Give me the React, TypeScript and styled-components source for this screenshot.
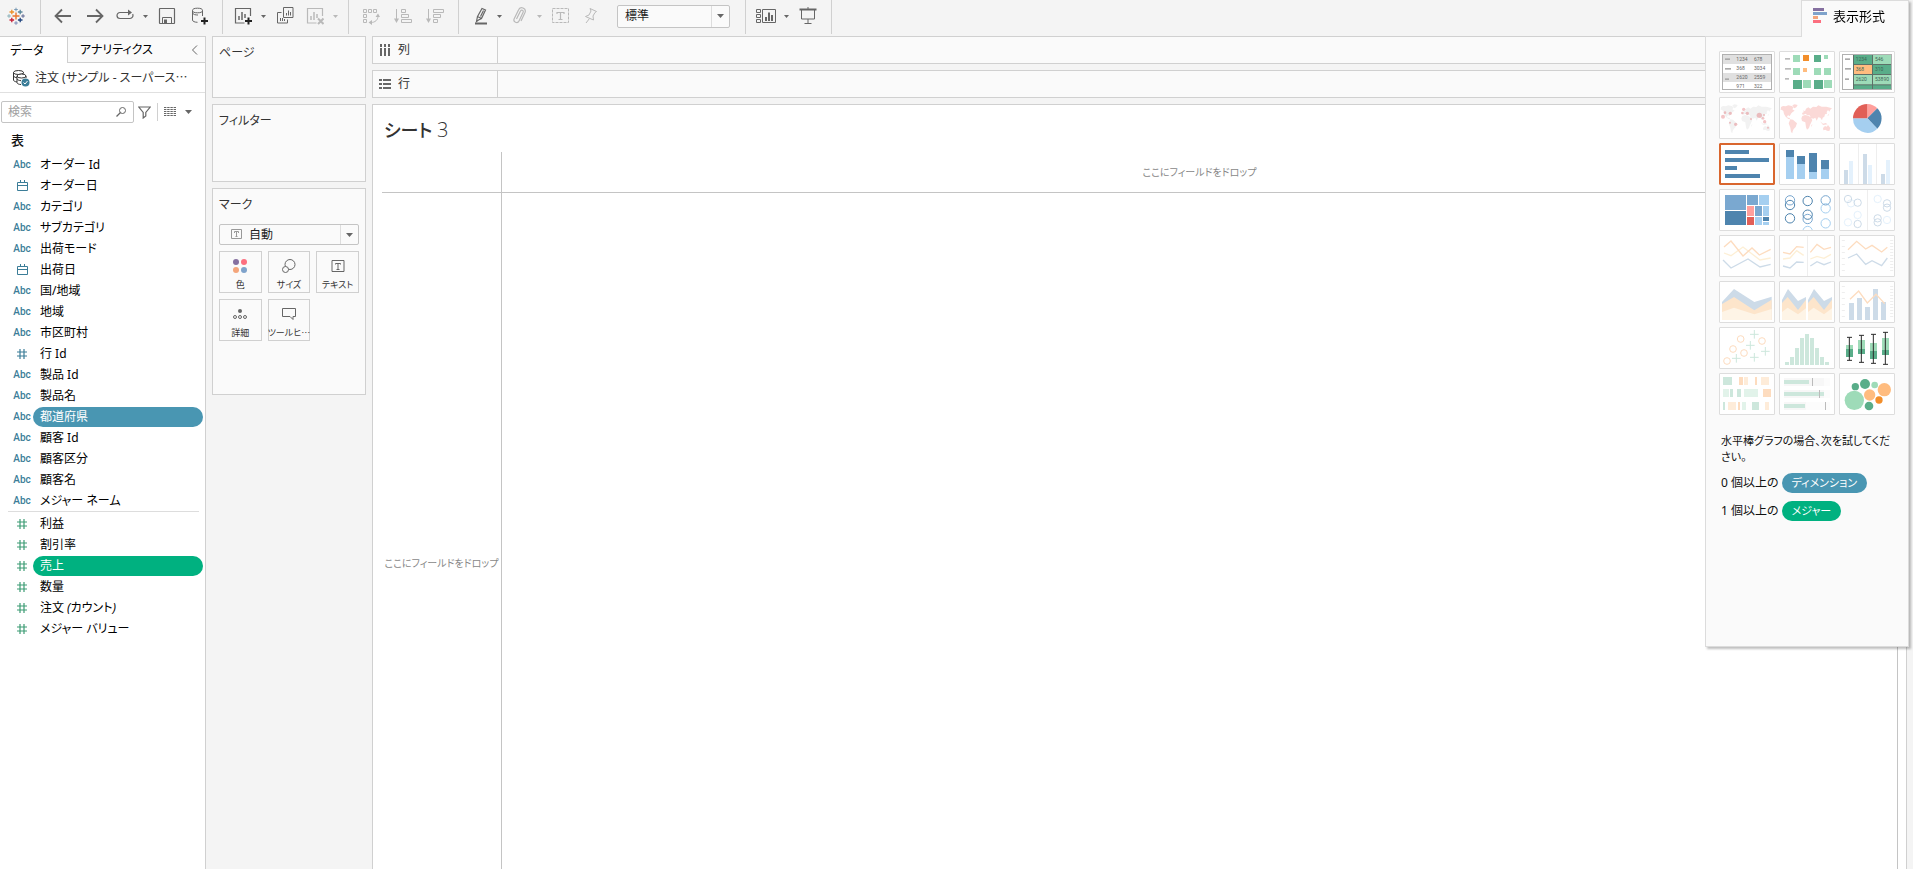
import React from "react";
import styled, { createGlobalStyle, css } from "styled-components";

const LINE = "#d0d0d0";
const BLUE = "#4996b2";
const GREEN = "#00b180";
const ICON = "#666";

const Global = createGlobalStyle`
  *, *::before, *::after { box-sizing: border-box; }
  body {
    margin: 0;
    background: #f4f4f4;
    color: #111;
    font-family: "Noto Sans", "Noto Sans CJK JP", sans-serif;
    font-size: 12px;
    line-height: 16px;
    font-feature-settings: "palt";
    font-synthesis: none;
  }
  button, input, select { font: inherit; color: inherit; font-feature-settings: inherit; }
  button { margin: 0; padding: 0; border: 0; background: none; cursor: pointer; }
  svg { display: block; flex: none; }
`;

/* ---------- layout ---------- */

const Page = styled.div`
  position: relative;
  display: flex;
  flex-direction: column;
  height: 100vh;
  overflow: hidden;
`;

const Toolbar = styled.header`
  display: flex;
  flex: none;
  height: 36px;
  padding-bottom: 2px;
`;

const ToolGroup = styled.div`
  display: flex;
  align-items: center;
  padding: 0 7px 2px 6px;
  border-right: 1px solid ${LINE};
`;

const ToolButton = styled.button<{ $paired?: boolean }>`
  display: flex;
  justify-content: center;
  align-items: center;
  width: ${(p) => (p.$paired ? 28 : 32)}px;
  height: 28px;
  color: ${ICON};
  &:disabled { color: #b9b9b9; }
`;

const CaretButton = styled(ToolButton)`
  width: 12px;
`;

const LogoButton = styled(ToolButton)`
  width: 20px;
  margin-right: 7px;
`;

const Body = styled.div`
  display: flex;
  flex: 1;
  min-height: 0;
`;

/* Centred ellipsis, as Japanese type sets it */
const Ellipsis = styled.span`
  font-family: "Noto Sans CJK JP", sans-serif;
`;

/* ---------- data pane ---------- */

const DataPane = styled.aside`
  flex: none;
  width: 206px;
  background: #fff;
  border: solid ${LINE};
  border-width: 1px 1px 0 0;
`;

const Tabs = styled.div`
  display: flex;
  height: 26px;
`;

const Tab = styled.button<{ $active?: boolean }>`
  flex: ${(p) => (p.$active ? "0 0 67px" : "1")};
  padding: 1px 10px 0;
  text-align: left;
  color: #000;
  ${(p) =>
    !p.$active &&
    css`
      display: flex;
      align-items: center;
      justify-content: space-between;
      padding: 1px 7px 0 12px;
      background: #fafafa;
      border: solid ${LINE};
      border-width: 0 0 1px 1px;
    `}
`;

const SourceRow = styled.div`
  display: flex;
  align-items: center;
  gap: 5px;
  height: 30px;
  padding-left: 12px;
  border-bottom: 1px solid #e0e0e0;
  color: #333;
  white-space: nowrap;
`;

const SearchRow = styled.div`
  display: flex;
  align-items: center;
  height: 22px;
  margin: 8px 0 0 1px;
  color: ${ICON};
`;

const SearchBox = styled.label`
  display: flex;
  align-items: center;
  width: 133px;
  height: 22px;
  padding: 0 6px;
  background: #fff;
  border: 1px solid #c4c4c4;
  border-radius: 2px;
`;

const SearchInput = styled.input`
  flex: 1;
  min-width: 0;
  padding: 0;
  border: 0;
  outline: 0;
  background: none;
  &::placeholder { color: #a0a0a0; opacity: 1; }
`;

const FilterButton = styled.button`
  padding: 0 6px 0 4px;
  color: ${ICON};
`;

const ViewButton = styled.button`
  display: flex;
  align-items: center;
  gap: 9px;
  height: 18px;
  padding-left: 6px;
  border-left: 1px solid ${LINE};
  color: ${ICON};
`;

const TableName = styled.h2`
  margin: 8px 0 5px 11px;
  font-size: 13px;
  font-weight: 500;
  line-height: 18px;
`;

const FieldList = styled.ul`
  margin: 0 0 0 6px;
  padding: 0;
  list-style: none;
`;

const Divider = styled.hr`
  height: 1px;
  margin: 0 6px 1px 8px;
  border: 0;
  background: #ddd;
`;

const Field = styled.li`
  display: flex;
  align-items: center;
  height: 21px;
`;

const FieldType = styled.span<{ $measure?: boolean }>`
  display: flex;
  justify-content: center;
  flex: 0 0 32px;
  color: ${(p) => (p.$measure ? "#3c9c74" : "#3b7d98")};
  font: 500 10px/16px Roboto, sans-serif;
`;

const FieldName = styled.button<{ $pill?: string; $italic?: boolean }>`
  flex: 1;
  height: 20px;
  margin: 0 2px 0 -5px;
  padding: 0 7px;
  border-radius: 10px;
  text-align: left;
  line-height: 20px;
  font-style: ${(p) => (p.$italic ? "italic" : "normal")};
  background: ${(p) => p.$pill || "none"};
  color: ${(p) => (p.$pill ? "#fff" : "#000")};
`;

/* ---------- cards ---------- */

const Cards = styled.div`
  display: flex;
  flex: none;
  flex-direction: column;
  gap: 6px;
  width: 166px;
  padding: 0 6px;
`;

const Card = styled.section<{ $height: number }>`
  min-height: ${(p) => p.$height}px;
  padding: 8px 6px;
  background: #fafafa;
  border: 1px solid ${LINE};
  color: #333;
`;

const CardTitle = styled.h2`
  margin: 0;
  font-size: 12px;
  font-weight: 400;
`;

const SelectWrap = styled.div<{ $wide?: boolean }>`
  position: relative;
  width: 113px;
  height: 23px;
  margin: 0 8px;
  ${(p) =>
    p.$wide &&
    css`
      width: auto;
      height: 21px;
      margin: 11px 0 6px;
    `}
`;

const Select = styled.select<{ $icon?: boolean }>`
  appearance: none;
  width: 100%;
  height: 100%;
  padding: 0 24px 0 ${(p) => (p.$icon ? 29 : 7)}px;
  border: 1px solid #c4c4c4;
  border-radius: 2px;
  background: #fafafa;
  color: #222;
`;

const SelectArrow = styled.span`
  position: absolute;
  inset: 1px 1px 1px auto;
  display: flex;
  align-items: center;
  justify-content: center;
  width: 18px;
  border-left: 1px solid #ddd;
  color: ${ICON};
  pointer-events: none;
`;

const SelectIcon = styled.span`
  position: absolute;
  top: 5px;
  left: 12px;
  color: #999;
  pointer-events: none;
`;

const MarkGrid = styled.div`
  display: grid;
  grid-template-columns: repeat(3, minmax(0, 1fr));
  gap: 6px;
`;

const MarkButton = styled.button`
  display: flex;
  flex-direction: column;
  align-items: center;
  justify-content: space-between;
  height: 42px;
  padding: 6px 0 0;
  border: 1px solid ${LINE};
  color: #333;
  font-size: 9px;
  line-height: 14px;
  white-space: nowrap;
`;

/* ---------- worksheet ---------- */

const Main = styled.main`
  display: flex;
  flex: 1;
  flex-direction: column;
  gap: 6px;
  min-width: 0;
  margin-right: 6px;
`;

const Shelf = styled.div`
  display: flex;
  flex: none;
  height: 28px;
  background: #fafafa;
  border: 1px solid ${LINE};
`;

const ShelfLabel = styled.div`
  display: flex;
  align-items: center;
  gap: 7px;
  width: 125px;
  padding-left: 6px;
  border-right: 1px solid ${LINE};
  color: #333;
`;

const Sheet = styled.section`
  display: flex;
  flex: 1;
  flex-direction: column;
  padding: 11px 8px 0 9px;
  background: #fff;
  border: solid ${LINE};
  border-width: 1px 1px 0;
`;

const SheetTitle = styled.h1`
  margin: 0 0 8px 2px;
  color: #333;
  font-size: 18px;
  font-weight: 500;
  line-height: 28px;
  span { font-family: "Open Sans", sans-serif; font-size: 20px; font-weight: 300; }
`;

const DropGrid = styled.div`
  display: grid;
  flex: 1;
  grid-template-columns: 120px 1fr;
  grid-template-rows: 41px 1fr;
  border-right: 1px solid #c4c4c4;
`;

const DropCell = styled.div<{ $right?: boolean; $bottom?: boolean; $low?: boolean }>`
  display: flex;
  align-items: center;
  justify-content: center;
  padding-top: ${(p) => (p.$low ? 64 : 0)}px;
  border: solid #c4c4c4;
  border-width: 0 ${(p) => (p.$right ? 1 : 0)}px ${(p) => (p.$bottom ? 1 : 0)}px 0;
  color: #888;
  font-size: 10px;
  white-space: nowrap;
`;

/* ---------- show me ---------- */

const ShowMe = styled.aside`
  position: absolute;
  top: 0;
  right: 4px;
  display: flex;
  flex-direction: column;
  align-items: flex-end;
  width: 204px;
  filter: drop-shadow(2px 2px 1px rgba(0, 0, 0, 0.25));
`;

const ShowMeTab = styled.button`
  position: relative;
  display: flex;
  align-items: center;
  gap: 5px;
  width: 108px;
  height: 37px;
  margin-bottom: -1px;
  padding: 0 0 6px 11px;
  background: #fafafa;
  border: 1px solid #dcdcdc;
  border-bottom: 0;
  font-size: 13px;
  color: #000;
`;

const ShowMePanel = styled.div`
  width: 100%;
  min-height: 611px;
  padding: 14px 12px 0 13px;
  background: #fafafa;
  border: 1px solid #dcdcdc;
`;

const Thumbs = styled.div`
  display: grid;
  grid-template-columns: repeat(3, 56px);
  gap: 4px;
`;

const Thumb = styled.button<{ $selected?: boolean }>`
  height: 42px;
  background: #fff;
  border: 1px solid ${(p) => (p.$selected ? "#d9662e" : "#ddd")};
  border-radius: 1px;
  box-shadow: ${(p) => (p.$selected ? "inset 0 0 0 1px #d9662e" : "none")};
`;

const Hint = styled.p`
  margin: 18px 0 8px 2px;
  font-size: 11px;
`;

const Requirement = styled.p`
  display: flex;
  align-items: center;
  gap: 3px;
  height: 20px;
  margin: 0 0 8px 2px;
`;

const Pill = styled.span<{ $color: string }>`
  padding: 0 10px;
  border-radius: 10px;
  background: ${(p) => p.$color};
  color: #fff;
  font-size: 11px;
  line-height: 20px;
`;

/* ---------- icons ---------- */

const Svg = ({ w = 18, h = 18, children }: { w?: number; h?: number; children: React.ReactNode }) => (
  <svg width={w} height={h} viewBox={`0 0 ${w} ${h}`} fill="none" stroke="currentColor" aria-hidden="true">
    {children}
  </svg>
);

const Caret = ({ big }: { big?: boolean }) =>
  big ? (
    <Svg w={7} h={4}><path d="M0 0h7L3.500 4z" fill="currentColor" stroke="none" /></Svg>
  ) : (
    <Svg w={5} h={3}><path d="M0 0h5L2.500 3z" fill="currentColor" stroke="none" /></Svg>
  );

const cross = (x: number, y: number, r: number, c: string, w: number) => (
  <path key={`${x}-${y}`} d={`M${x - r} ${y}h${2 * r}M${x} ${y - r}v${2 * r}`} stroke={c} strokeWidth={w} />
);

const Logo = () => (
  <Svg>
    {cross(9, 9, 3.5, "#e8762d", 1.4)}
    {cross(9, 2.5, 1.8, "#7b9bb5", 1)}
    {cross(9, 16, 1.8, "#7b88b5", 1)}
    {cross(2, 9, 1.8, "#8ab0b8", 1)}
    {cross(16, 9, 1.8, "#5c6692", 1)}
    {cross(4.8, 5, 2.3, "#eb912c", 1.3)}
    {cross(13.2, 5, 2.3, "#59879b", 1.3)}
    {cross(4.8, 13, 2.3, "#c72037", 1.3)}
    {cross(13.2, 13, 2.3, "#1f447e", 1.3)}
  </Svg>
);

const Back = () => <Svg><path d="M17 9H2M8 2.500L1.500 9L8 15.500" strokeWidth="1.800" /></Svg>;
const Forward = () => <Svg><path d="M1 9h15M10 2.500L16.500 9L10 15.500" strokeWidth="1.800" /></Svg>;
const Redo = () => (
  <Svg>
    <path d="M14 5.500H4a3 3 0 0 0-3 3a3 3 0 0 0 3 3h10a3 3 0 0 0 2.600-4.400" strokeWidth="1.200" />
    <path d="M12 2.500l4 3-4 3z" fill="currentColor" stroke="none" />
  </Svg>
);
const Save = () => (
  <Svg>
    <rect x="1.500" y="1.500" width="15" height="15" rx=".5" strokeWidth="1.200" />
    <path d="M4.500 16v-5.500h9V16" />
    <path d="M6 12.500h3V16H6z" fill="currentColor" stroke="none" />
  </Svg>
);
const PLUS = <path d="M11 14h7M14.500 10.500v7" stroke="#222" strokeWidth="2" />;
const Database = () => (
  <Svg>
    <ellipse cx="7.500" cy="3.500" rx="5" ry="2.300" />
    <path d="M2.500 3.500v9.500c0 1.400 2 2.200 5 2.300M12.500 3.500V9M2.500 6c.6 1.600 3 2 5.500 2" />
    {PLUS}
  </Svg>
);
const NewSheet = () => (
  <Svg>
    <path d="M16.500 9V1.500h-15v14.500h9" strokeWidth="1.200" />
    <path d="M5 13V9M8 13V5M11 11V7" strokeWidth="1.500" />
    {PLUS}
  </Svg>
);
const ClearSheet = () => (
  <Svg>
    <path d="M16.500 9V1.500h-15v14.500h9" strokeWidth="1.200" />
    <path d="M5 13V9M8 13V5M11 11V7" strokeWidth="1.500" />
    <path d="M12 11.500l5.500 5.500M17.500 11.500L12 17" strokeWidth="2" />
  </Svg>
);
const Duplicate = () => (
  <Svg>
    <path d="M7.500.5h9.500v10H7.500zM5.500 5.500h-4v10.500h10v-3.500M4.500 14v-3M6.500 14v-3M8.500 14v-2M10.500 8.500V6M12.500 8.500V3.500M14.500 8.500V5" />
  </Svg>
);
const Swap = () => (
  <Svg>
    <path d="M1.500 2.500h3v3h-3zM6.500 2.500h3v3h-3zM11.500 2.500h3v3h-3zM1.500 7.500h3v3h-3zM1.500 12.500h3v3h-3zM16 9c0 4-3 6.500-7 6.500" />
    <path d="M13.500 10L16 6.500l2 3.500zM10 13l-3.500 2.500L10 18z" fill="currentColor" stroke="none" />
  </Svg>
);
const Sort = ({ desc }: { desc?: boolean }) => (
  <Svg>
    <path d="M2.500 2v12" />
    <path d="M0 11.500h5L2.500 16z" fill="currentColor" stroke="none" />
    <path d={desc ? "M7.500 2.500h10v3h-10zM7.500 7.500h7v3h-7zM7.500 12.500h4v3h-4z" : "M7.500 2.500h4v3h-4zM7.500 7.500h7v3h-7zM7.500 12.500h10v3h-10z"} />
  </Svg>
);
const Highlighter = () => (
  <Svg>
    <path d="M7.500 9.500L12 1.500l3.500 1.500-4 8.500-3 1.500-2 1.500zM7.500 9.500l4 2M10.500 9.500l3-6" strokeWidth="1.200" />
    <path d="M5 16.500h12" strokeWidth="2" />
  </Svg>
);
const Clip = () => (
  <Svg>
    <path d="M6.500 12L10.500 4a1.400 1.400 0 0 1 2.600 1.200L9 14a2.600 2.600 0 0 1-4.800-2.200L8.500 3A3.400 3.400 0 0 1 15 5.500L11 14" strokeWidth="1.200" />
  </Svg>
);
const TextBox = () => (
  <Svg>
    <rect x=".5" y="1.500" width="16" height="14" strokeDasharray="3 1" />
    <path d="M5 7V5.500h7V7M8.500 5.500v7.500M6.500 12.500h4" strokeWidth="1.200" />
  </Svg>
);
const Pin = () => (
  <Svg>
    <path d="M6 1.500l6.500 3-1.500 1-2 3.500.5 4L1.500 9.500 5 8l2-4zM5.500 11.500L2 16" />
  </Svg>
);
const CardsIcon = () => (
  <Svg w={20}>
    <path d="M.5 2.500h4v3h-4zM.5 7.500h4v3h-4zM.5 12.500h4v3h-4zM6.500 2.500h13v13h-13z" />
    <path d="M10 14v-4M13 14V5.500M16 14V8" strokeWidth="2" />
  </Svg>
);
const Present = () => (
  <Svg>
    <path d="M2.500 3v9h13V3M9 12v4M9 0v2" />
    <path d="M.5 2.500h17" strokeWidth="2" />
    <path d="M5.500 16.500h7" />
  </Svg>
);
const DataSource = () => (
  <Svg>
    <ellipse cx="6.500" cy="3.500" rx="5" ry="2" />
    <path d="M1.500 3.500v7.500c0 1 1.500 1.700 3.500 2M11.500 3.500v1M1.500 7c.6 1 2 1.600 3.500 1.800" />
    <ellipse cx="9.500" cy="7" rx="4.500" ry="2" fill="#fff" />
    <path d="M5 7v6.500c0 1.200 2 2 4 2M14 7v2M5 10c.6 1 2 1.500 4 1.700" />
    <circle cx="13.500" cy="13.500" r="4" fill="#3b7d98" stroke="none" />
    <path d="M11.500 13.500l1.500 1.500 2.500-3" stroke="#fff" />
  </Svg>
);
const Search = () => (
  <Svg w={12} h={12}><circle cx="7.500" cy="4.500" r="3" /><path d="M5.500 6.500L1.500 10.500" strokeWidth="1.300" /></Svg>
);
const Funnel = () => <Svg w={13} h={13}><path d="M.8 1h11.400L7.800 6.500V10l-2.600 2V6.500z" strokeWidth="1.200" /></Svg>;
const ListIcon = () => (
  <Svg w={12} h={10}>
    <path d="M0 .5h12M0 2.500h12M0 4.500h12M0 6.500h12M0 8.500h12" strokeDasharray="2.400 .8" />
  </Svg>
);
const Calendar = () => (
  <Svg w={11} h={11}>
    <path d="M.5 2.500h10v8h-10zM.5 5.500h10M3.500 0v2M7.500 0v2" />
  </Svg>
);
const Hash = () => <Svg w={10} h={10}><path d="M3 0v10M7 0v10M0 3h10M0 7h10" strokeWidth="1.200" /></Svg>;
const TextMark = () => (
  <Svg w={11} h={10}>
    <path d="M.5.5h10v9H.5zM3.500 4V2.500h4V4M5.500 2.500v5M4.500 7.500h2" />
  </Svg>
);

const markIcons: Record<string, React.ReactNode> = {
  color: (
    <Svg w={16} h={16}>
      <g stroke="none">
        <circle cx="4" cy="4" r="3" fill="#8570a0" /><circle cx="12" cy="4" r="3" fill="#fc6f7f" />
        <circle cx="4" cy="12" r="3" fill="#f4a57b" /><circle cx="12" cy="12" r="3" fill="#7fa3cb" />
      </g>
    </Svg>
  ),
  size: (
    <Svg w={16} h={16}>
      <circle cx="9" cy="6.500" r="5" stroke={ICON} /><circle cx="4.500" cy="11.500" r="3" fill="#fafafa" stroke={ICON} />
    </Svg>
  ),
  text: <Svg w={16} h={16}><path d="M2 2.500h12v11H2zM5.500 6.500v-1h5v1M8 5.500v6M6.500 11.500h3" stroke={ICON} /></Svg>,
  detail: (
    <Svg w={16} h={16}>
      <circle cx="8" cy="5" r="2" fill={ICON} stroke="none" />
      <g stroke={ICON}><circle cx="3" cy="11" r="1.500" /><circle cx="8" cy="11" r="1.500" /><circle cx="13" cy="11" r="1.500" /></g>
    </Svg>
  ),
  tooltip: <Svg w={16} h={16}><path d="M1.500 2.500h13v8h-2.500v3l-3-3H1.500z" stroke={ICON} /></Svg>,
};

const ShelfColumns = () => <Svg w={12} h={12}><path d="M2 0v3M6 0v3M10 0v3M2 4v8M6 4v8M10 4v8" strokeWidth="2" stroke={ICON} /></Svg>;
const ShelfRows = () => <Svg w={12} h={12}><path d="M0 2h3M0 6h3M0 10h3M4 2h8M4 6h8M4 10h8" strokeWidth="2" stroke={ICON} /></Svg>;

const ShowMeIcon = () => (
  <Svg w={15} h={16}>
    <g stroke="none">
      <path d="M0 0h11v3H0z" fill="#8570a0" /><path d="M0 4h14v3H0z" fill="#7fa3cb" />
      <path d="M0 8h5v3H0z" fill="#f4a57b" /><path d="M0 12h8v3H0z" fill="#fc6f7f" />
    </g>
  </Svg>
);

/* ---------- chart thumbnails, drawn on a 168 x 126 canvas ---------- */

type Box = [number, number, number, number, string];
const D = "#59ad89", L = "#9edbb8", OR = "#f28e2b", LO = "#ffbc7f";
const DB = "#4e84ae", MB = "#7aa8d0", LB = "#a5cff0";
const FB = "#cddbe8", FL = "#e4f1fc", FO = "#fddcbf", FY = "#fdefd5", FG = "#cde7dc", FLG = "#e2f3ea", FLO = "#feecd9";

const boxes = (list: Box[]) =>
  list.map(([x, y, w, h, c], i) => <rect key={i} x={x} y={y} width={w} height={h} fill={c} />);
const rings = (list: [number, number, string][], r: number) =>
  list.map(([x, y, c], i) => <circle key={i} cx={x} cy={y} r={r} fill="none" stroke={c} strokeWidth="3" />);
const dots = (list: [number, number, number, string][]) =>
  list.map(([x, y, r, c], i) => <circle key={i} cx={x} cy={y} r={r} fill={c} />);
const line = (points: string, c: string) => (
  <polyline points={points} fill="none" stroke={c} strokeWidth="4" />
);
const labels = (list: [number, number, string][], c: string) =>
  list.map(([x, y, t], i) => (
    <text key={i} x={x} y={y} fill={c} fontSize="15" fontFamily="Roboto, sans-serif">{t}</text>
  ));
const ticks = (x: number, step: number) => (
  <path d={`M${x} 15V108`} stroke="#eee" strokeWidth="9" strokeDasharray={`3 ${step - 3}`} />
);

const world =
  "M6 30L12 27 20 28 28 25 38 27 44 31 40 37 47 41 41 45 37 49 34 54 31 58 29 55 24 57 26 62 31 62 34 67 28 66 20 59 15 51 13 42 8 38 5 39zM40 25L47 22 56 24 52 31 46 34zM34 67L42 68 47 73 54 79 50 90 44 96 41 103 40 109 36 105 34 92 29 79zM70 57L78 54 88 56 95 61 100 69 97 76 93 84 90 93 84 98 81 91 79 76 69 72 67 64zM69 52L70 47 74 46 73 40 78 43 81 35 88 31 94 35 102 29 112 30 118 25 128 29 142 29 159 34 154 38 151 44 147 39 143 45 144 50 138 52 136 59 131 62 129 70 124 62 118 61 113 71 109 62 103 65 96 63 92 55 84 54 80 50 74 53zM132 93L138 87 143 89 147 84 154 93 151 102 144 101 139 98 133 100zM123 73L132 80 140 78 146 82 132 84zM97 84L100 82 98 91zM145 57L149 51 150 54z";

const red = "rgba(220,90,95,.35)";

const area = (top: [string, string, string], right: number, left: number) => (
  <>
    {top.map((p, i) => (
      <polygon key={i} points={`${left},117 ${p} ${right},117`} fill={[FB, "#fde5cb", "#fef4e6"][i]} />
    ))}
  </>
);

const whisker = (x: number, a: number, b: number) => (
  <path key={x} d={`M${x} ${a}V${b}M${x - 7} ${a}h15M${x - 7} ${b}h15`} stroke="#2b2b2b" strokeWidth="3" />
);

const charts: [string, React.ReactNode][] = [
  ["テキスト表", <>
    {boxes([[11, 12, 146, 27, "#e0e0e0"], [11, 66, 146, 27, "#e0e0e0"], [18, 22, 15, 5, "#aaa"], [18, 51, 18, 5, "#aaa"], [18, 82, 12, 5, "#aaa"]])}
    <rect x="10.500" y="10.500" width="147" height="105" fill="none" stroke="#b0b0b0" strokeWidth="3" />
    {labels([[52, 31, "1234"], [105, 31, "678"], [52, 58, "368"], [105, 58, "3034"], [52, 85, "2620"], [105, 85, "2559"], [52, 110, "971"], [105, 110, "322"]], "#666")}
  </>],
  ["ヒート マップ", boxes([
    [18, 21, 15, 5, "#bbb"], [18, 51, 18, 5, "#bbb"], [18, 81, 12, 5, "#bbb"],
    [42, 12, 21, 21, L], [72, 12, 18, 18, OR], [105, 12, 21, 21, D], [135, 12, 12, 12, L],
    [42, 51, 21, 21, L], [72, 51, 12, 12, LO], [105, 51, 21, 21, L], [135, 51, 21, 21, L],
    [42, 87, 27, 27, D], [72, 87, 24, 24, L], [105, 87, 27, 27, D], [135, 87, 24, 24, L]])],
  ["ハイライト表", <>
    {boxes([[18, 22, 15, 5, "#aaa"], [18, 51, 18, 5, "#aaa"], [18, 82, 12, 5, "#aaa"],
      [42, 11, 116, 105, "#5d7068"],
      [45, 12, 54, 27, D], [102, 12, 55, 27, L], [45, 42, 54, 27, LO], [102, 42, 55, 27, D],
      [45, 72, 54, 28, L], [102, 72, 55, 28, L], [45, 103, 54, 12, D], [102, 103, 55, 12, D]])}
    <rect x="10.500" y="10.500" width="147" height="105" fill="none" stroke="#b0b0b0" strokeWidth="3" />
    {labels([[50, 30, "1234"], [108, 30, "546"], [50, 61, "368"], [108, 61, "310"], [50, 91, "2620"], [108, 91, "53890"]], "#3f6655")}
  </>],
  ["記号マップ", <>
    <path d={world} fill="#f2f2f2" />
    {dots([[12, 59, 6, red], [18, 47, 4, red], [34, 49, 5, red], [33, 77, 3, red], [50, 82, 5, red], [74, 37, 5, red], [70, 48, 4, red], [85, 49, 5, red], [96, 66, 3, red], [121, 55, 8, red], [135, 54, 3, red], [132, 64, 4, red], [137, 74, 5, red], [147, 92, 3, red]])}
  </>],
  ["マップ", <path d={world} fill="#fbd9d7" />],
  ["円グラフ", <>
    <path d="M85 64V21A43 43 0 0 1 115 34z" fill="#ff9f9c" />
    <path d="M85 64L115 34A43 43 0 0 1 115 95z" fill={DB} />
    <path d="M85 64L115 95A43 43 0 0 1 42 64z" fill={LB} />
    <path d="M85 64H42A43 43 0 0 1 85 21z" fill="#e15f57" />
  </>],
  ["水平棒グラフ", boxes([[18, 21, 72, 12, DB], [18, 45, 132, 12, DB], [18, 69, 36, 12, DB], [18, 93, 105, 12, DB]])],
  ["積み上げ棒グラフ", boxes([[21, 21, 24, 21, DB], [21, 42, 24, 66, LB], [54, 39, 24, 24, DB], [54, 63, 24, 45, LB], [90, 30, 24, 57, DB], [90, 87, 24, 21, LB], [126, 51, 24, 27, DB], [126, 78, 24, 30, LB]])],
  ["並列棒グラフ", boxes([[57, 3, 3, 120, "#eee"], [111, 3, 3, 120, "#eee"], [15, 81, 12, 42, FB], [30, 54, 12, 69, FL], [72, 33, 12, 90, FB], [87, 66, 12, 57, FL], [126, 93, 12, 30, FB], [141, 51, 12, 72, FL]])],
  ["ツリーマップ", boxes([[18, 18, 63, 45, MB], [18, 66, 63, 42, DB], [84, 18, 33, 30, MB], [120, 18, 30, 30, LB], [84, 51, 21, 30, "#ff9f9c"], [108, 51, 21, 30, MB], [132, 51, 18, 30, LB], [84, 84, 21, 24, "#e15f57"], [108, 84, 21, 24, LB], [132, 84, 18, 12, DB], [132, 99, 18, 9, LB]])],
  ["円ビュー", rings([[33, 34, MB], [33, 48, DB], [33, 88, DB], [86, 36, DB], [86, 90, MB], [86, 77, DB], [86, 126, LB], [140, 58, LB], [140, 34, MB], [140, 103, LB]], 14)],
  ["並列円ビュー", <>
    {boxes([[84, 3, 3, 120, "#eee"]])}
    {rings([[36, 43, FL], [27, 30, FB], [56, 41, FB], [56, 78, FL], [27, 100, FL], [56, 105, FB], [116, 30, FL], [144, 56, FB], [144, 43, FB], [116, 100, FB], [116, 88, FB], [144, 93, FL]], 11)}
  </>],
  ["折れ線グラフ (連続)", <>
    {line("15,54 36,62 72,36 123,75 155,69", FY)}
    {line("15,36 36,18 72,63 99,39 121,60 155,43", FO)}
    {line("12,75 36,99 87,72 123,96 155,88", FB)}
  </>],
  ["折れ線グラフ (不連続)", <>
    {boxes([[84, 3, 3, 120, "#eee"]])}
    {line("12,72 33,69 53,47 74,61", FY)}{line("12,52 33,57 53,35 74,37", FO)}{line("12,93 33,99 53,81 74,82", FB)}
    {line("94,72 114,64 135,70 156,58", FY)}{line("94,52 114,28 135,43 156,37", FO)}{line("94,93 114,80 135,89 156,81", FB)}
  </>],
  ["二重線", <>
    {ticks(13, 18)}{ticks(158, 9)}
    {line("27,44 53,19 80,42 99,31 128,51 145,37", FO)}{line("27,69 53,57 80,88 99,77 128,92 145,69", FB)}
  </>],
  ["面グラフ (連続)", area(["9,63 45,24 106,63 158,47", "9,69 45,48 106,88 158,56", "9,93 45,80 106,100 158,84"], 158, 9)],
  ["面グラフ (不連続)", <>
    {area(["9,57 27,24 57,60 81,48", "9,66 26,48 57,87 81,56", "9,93 26,80 57,100 81,82"], 81, 9)}
    {area(["87,57 105,24 135,60 159,48", "87,66 104,48 135,87 159,56", "87,93 104,80 135,100 159,82"], 159, 87)}
  </>],
  ["二重結合", <>
    {ticks(13, 18)}{ticks(158, 9)}
    {boxes([[30, 66, 15, 51, FB], [54, 51, 15, 66, FB], [78, 78, 15, 39, FB], [102, 24, 15, 93, FB], [126, 63, 15, 54, FB]])}
    {line("33,55 59,30 85,66 111,40 137,68", FO)}
  </>],
  ["散布図", <>
    {rings([[65, 36, FO], [129, 42, FO], [42, 66, FO], [75, 78, FO], [24, 102, FO]], 10)}
    {[[106, 22], [94, 55], [139, 73], [52, 94], [106, 91]].map(([x, y]) => cross(x, y, 13, FG, 3))}
  </>],
  ["ヒストグラム", boxes([105, 90, 63, 33, 21, 33, 63, 90, 105].map((y, i): Box => [18 + i * 15, y, 12, 114 - y, FG]))],
  ["箱ひげ図", <>
    {boxes([[21, 54, 21, 12, L], [21, 66, 21, 24, D], [57, 39, 21, 27, L], [57, 66, 21, 15, D], [93, 48, 21, 24, L], [93, 72, 21, 24, D], [129, 33, 21, 36, L], [129, 69, 21, 15, D]])}
    {whisker(31, 31, 100)}{whisker(67, 25, 106)}{whisker(103, 22, 109)}{whisker(139, 16, 112)}
  </>],
  ["ガント ビュー", boxes([
    [12, 12, 27, 24, FG], [60, 12, 12, 24, FO], [75, 12, 12, 24, FLO], [108, 12, 6, 24, FO], [126, 12, 24, 24, FLO],
    [12, 48, 18, 24, FLG], [33, 48, 9, 24, FG], [54, 48, 12, 24, FG], [75, 48, 42, 24, FLG], [132, 48, 24, 24, FO],
    [12, 87, 6, 24, FG], [27, 87, 24, 24, FLO], [57, 87, 6, 24, FO], [69, 87, 12, 24, FLG], [99, 87, 21, 24, FG], [138, 87, 12, 24, FLO]])],
  ["ブレット グラフ", boxes([
    [15, 15, 120, 24, "#f7f7f7"], [135, 15, 18, 24, "#fcfcfc"], [15, 51, 120, 24, "#f7f7f7"], [135, 51, 18, 24, "#fcfcfc"], [15, 87, 66, 24, "#f7f7f7"], [81, 87, 72, 24, "#fcfcfc"],
    [15, 21, 75, 12, FG], [15, 57, 120, 12, FG], [15, 93, 63, 12, FG],
    [99, 15, 3, 24, "#bbb"], [120, 51, 3, 24, "#bbb"], [138, 87, 3, 24, "#bbb"]])],
  ["パックバブル", dots([[46, 82, 29, L], [49, 41, 11, D], [78, 33, 15, D], [107, 36, 10, L], [136, 50, 20, LO], [92, 66, 17, LO], [120, 81, 11, OR], [90, 99, 13, D]])],
];

/* ---------- data ---------- */

type FieldData = { name: string; type: "abc" | "date" | "num"; selected?: boolean; italic?: boolean };

const dimensions: FieldData[] = [
  { name: "オーダー Id", type: "abc" },
  { name: "オーダー日", type: "date" },
  { name: "カテゴリ", type: "abc" },
  { name: "サブカテゴリ", type: "abc" },
  { name: "出荷モード", type: "abc" },
  { name: "出荷日", type: "date" },
  { name: "国/地域", type: "abc" },
  { name: "地域", type: "abc" },
  { name: "市区町村", type: "abc" },
  { name: "行 Id", type: "num" },
  { name: "製品 Id", type: "abc" },
  { name: "製品名", type: "abc" },
  { name: "都道府県", type: "abc", selected: true },
  { name: "顧客 Id", type: "abc" },
  { name: "顧客区分", type: "abc" },
  { name: "顧客名", type: "abc" },
  { name: "メジャー ネーム", type: "abc", italic: true },
];

const measures: FieldData[] = [
  { name: "利益", type: "num" },
  { name: "割引率", type: "num" },
  { name: "売上", type: "num", selected: true },
  { name: "数量", type: "num" },
  { name: "注文 (カウント)", type: "num", italic: true },
  { name: "メジャー バリュー", type: "num", italic: true },
];

const marks: { icon: string; label: string; cut?: boolean }[] = [
  { icon: "color", label: "色" },
  { icon: "size", label: "サイズ" },
  { icon: "text", label: "テキスト" },
  { icon: "detail", label: "詳細" },
  { icon: "tooltip", label: "ツールヒ", cut: true },
];

const Fields = ({ items, measure }: { items: FieldData[]; measure?: boolean }) => (
  <FieldList>
    {items.map((f) => (
      <Field key={f.name}>
        <FieldType $measure={measure}>
          {f.type === "abc" ? "Abc" : f.type === "date" ? <Calendar /> : <Hash />}
        </FieldType>
        <FieldName $italic={f.italic} $pill={f.selected ? (measure ? GREEN : BLUE) : undefined}>
          {f.name}
        </FieldName>
      </Field>
    ))}
  </FieldList>
);

type ToolProps = { label: string; children: React.ReactNode; paired?: boolean; off?: boolean };

const Tool = ({ label, children, paired, off }: ToolProps) => (
  <ToolButton aria-label={label} $paired={paired} disabled={off}>{children}</ToolButton>
);

const Menu = ({ label, off }: { label: string; off?: boolean }) => (
  <CaretButton aria-label={label} disabled={off}><Caret /></CaretButton>
);

export default function App() {
  return (
    <Page>
      <Global />
      <Toolbar>
        <ToolGroup>
          <LogoButton aria-label="スタート ページ"><Logo /></LogoButton>
        </ToolGroup>
        <ToolGroup>
          <Tool label="元に戻す"><Back /></Tool>
          <Tool label="やり直し"><Forward /></Tool>
          <Tool label="再生" paired><Redo /></Tool>
          <Menu label="再生メニュー" />
          <Tool label="保存"><Save /></Tool>
          <Tool label="新しいデータ ソース"><Database /></Tool>
        </ToolGroup>
        <ToolGroup>
          <Tool label="新しいワークシート" paired><NewSheet /></Tool>
          <Menu label="新規メニュー" />
          <Tool label="複製"><Duplicate /></Tool>
          <Tool label="シートのクリア" paired off><ClearSheet /></Tool>
          <Menu label="クリア メニュー" off />
        </ToolGroup>
        <ToolGroup>
          <Tool label="行と列の交換" off><Swap /></Tool>
          <Tool label="昇順で並べ替え" off><Sort /></Tool>
          <Tool label="降順で並べ替え" off><Sort desc /></Tool>
        </ToolGroup>
        <ToolGroup>
          <Tool label="ハイライト" paired><Highlighter /></Tool>
          <Menu label="ハイライト メニュー" />
          <Tool label="グループ" paired off><Clip /></Tool>
          <Menu label="グループ メニュー" off />
          <Tool label="マーク ラベル" off><TextBox /></Tool>
          <Tool label="軸の固定" off><Pin /></Tool>
          <SelectWrap>
            <Select aria-label="サイズ調整" defaultValue="標準">
              <option>標準</option>
            </Select>
            <SelectArrow><Caret big /></SelectArrow>
          </SelectWrap>
        </ToolGroup>
        <ToolGroup>
          <Tool label="カードの表示" paired><CardsIcon /></Tool>
          <Menu label="カード メニュー" />
          <Tool label="プレゼンテーション モード"><Present /></Tool>
        </ToolGroup>
      </Toolbar>

      <Body>
        <DataPane>
          <Tabs>
            <Tab $active>データ</Tab>
            <Tab>
              アナリティクス
              <Svg w={7} h={10}><path d="M6 .5L1.500 5L6 9.500" stroke={ICON} /></Svg>
            </Tab>
          </Tabs>
          <SourceRow>
            <DataSource />
            <span>注文 (サンプル - スーパース<Ellipsis>…</Ellipsis></span>
          </SourceRow>
          <SearchRow>
            <SearchBox>
              <SearchInput placeholder="検索" aria-label="検索" />
              <Search />
            </SearchBox>
            <FilterButton aria-label="フィルター"><Funnel /></FilterButton>
            <ViewButton aria-label="表示"><ListIcon /><Caret big /></ViewButton>
          </SearchRow>
          <TableName>表</TableName>
          <Fields items={dimensions} />
          <Divider />
          <Fields items={measures} measure />
        </DataPane>

        <Cards>
          <Card $height={62}><CardTitle>ページ</CardTitle></Card>
          <Card $height={78}><CardTitle>フィルター</CardTitle></Card>
          <Card $height={207}>
            <CardTitle>マーク</CardTitle>
            <SelectWrap $wide>
              <Select $icon aria-label="マーク タイプ" defaultValue="自動">
                <option>自動</option>
              </Select>
              <SelectIcon><TextMark /></SelectIcon>
              <SelectArrow><Caret big /></SelectArrow>
            </SelectWrap>
            <MarkGrid>
              {marks.map(({ icon, label, cut }) => (
                <MarkButton key={icon}>
                  {markIcons[icon]}
                  <span>{label}{cut && <Ellipsis>…</Ellipsis>}</span>
                </MarkButton>
              ))}
            </MarkGrid>
          </Card>
        </Cards>

        <Main>
          <Shelf><ShelfLabel><ShelfColumns />列</ShelfLabel></Shelf>
          <Shelf><ShelfLabel><ShelfRows />行</ShelfLabel></Shelf>
          <Sheet>
            <SheetTitle>シート <span>3</span></SheetTitle>
            <DropGrid>
              <DropCell $right $bottom />
              <DropCell $bottom>ここにフィールドをドロップ</DropCell>
              <DropCell $right $low>ここにフィールドをドロップ</DropCell>
              <DropCell />
            </DropGrid>
          </Sheet>
        </Main>
      </Body>

      <ShowMe>
        <ShowMeTab><ShowMeIcon />表示形式</ShowMeTab>
        <ShowMePanel>
          <Thumbs>
            {charts.map(([name, drawing]) => (
              <Thumb key={name} aria-label={name} $selected={name === "水平棒グラフ"}>
                <svg width="54" height="40" viewBox="3 3 162 120" aria-hidden="true">{drawing}</svg>
              </Thumb>
            ))}
          </Thumbs>
          <Hint>水平棒グラフの場合、次を試してください。</Hint>
          <Requirement>0 個以上の <Pill $color={BLUE}>ディメンション</Pill></Requirement>
          <Requirement>1 個以上の <Pill $color={GREEN}>メジャー</Pill></Requirement>
        </ShowMePanel>
      </ShowMe>
    </Page>
  );
}
